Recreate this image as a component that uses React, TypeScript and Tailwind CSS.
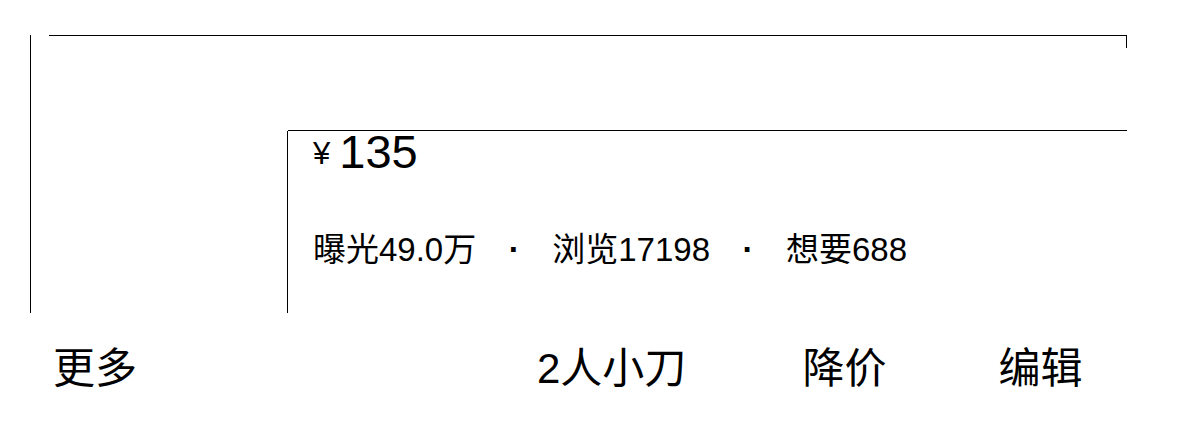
export default function App() {
  const stats = [
    { label: '曝光', value: '49.0万' },
    { label: '浏览', value: '17198' },
    { label: '想要', value: '688' },
  ];

  return (
    <div className="w-[1179px] h-[442px] bg-white text-black font-['Liberation_Sans','Noto_Sans_CJK_SC',sans-serif] overflow-hidden">
      {/* Item card */}
      <div className="flex pl-[30px] pt-[35px]">
        {/* Cover image frame */}
        <div className="w-[258px] h-[278px] border-l border-black flex flex-col">
          <div className="h-px bg-black ml-[18px]" />
          <div className="flex-1" />
          <div className="h-[182px] border-r border-black" />
        </div>

        {/* Details */}
        <div className="w-[839px] flex flex-col">
          <div className="h-[96px] border-y border-black flex justify-end">
            <div className="w-px h-[12px] bg-black" />
          </div>

          <div className="pl-[25px] text-[47px] leading-[42px] whitespace-nowrap">
            <span className="text-[31px] align-[4px]">¥</span>
            <span className="ml-[9px]">135</span>
          </div>

          <div className="pl-[25px] mt-[58px] text-[33px] leading-[33px] whitespace-nowrap flex">
            {stats.map((s, i) => (
              <span key={s.label} className="flex">
                {i > 0 && <span className="inline-block w-[12px] mx-[32px] text-center font-bold">·</span>}
                <span>
                  {s.label}
                  {s.value}
                </span>
              </span>
            ))}
          </div>
        </div>
      </div>

      {/* Action bar */}
      <div className="flex mt-[35px] pl-[53px] text-[42px] leading-[42px] whitespace-nowrap">
        <span>更多</span>
        <span className="ml-[400px]">2人小刀</span>
        <span className="ml-[116px]">降价</span>
        <span className="ml-[112px]">编辑</span>
      </div>
    </div>
  );
}
